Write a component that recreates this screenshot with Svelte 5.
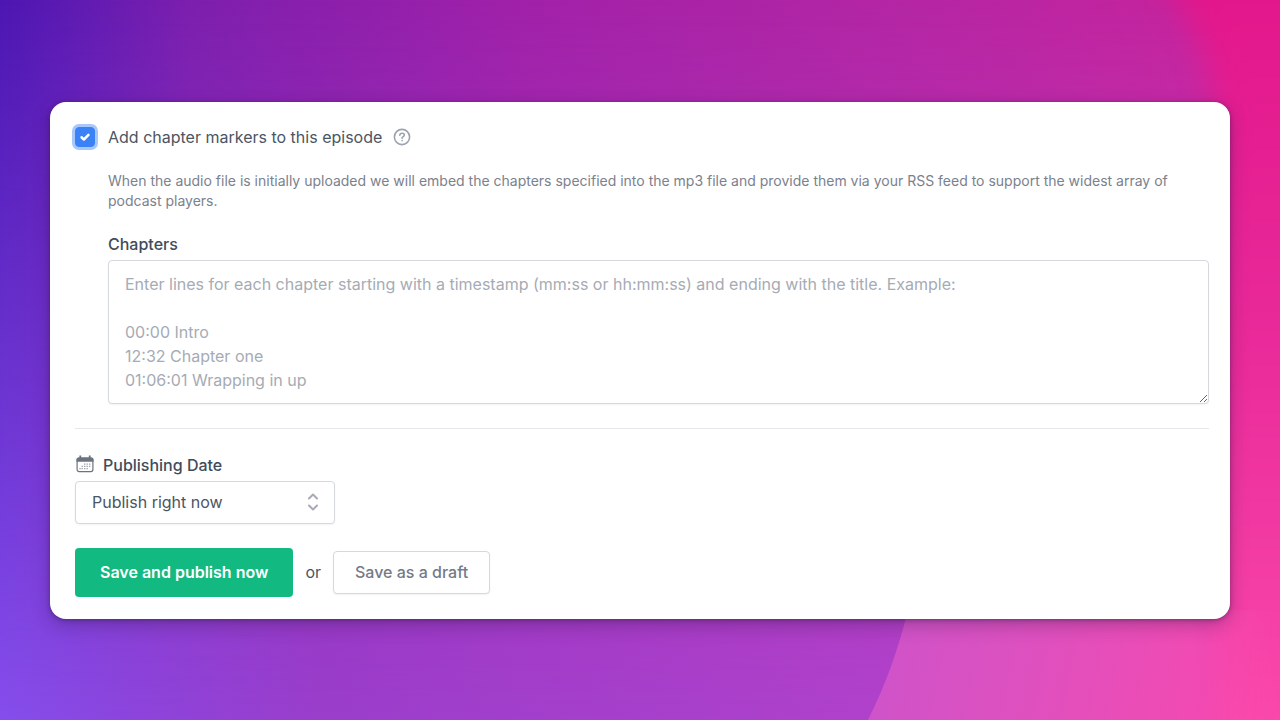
<script lang="ts">
const placeholder: string = [
    'Enter lines for each chapter starting with a timestamp (mm:ss or hh:mm:ss) and ending with the title. Example:',
    '',
    '00:00 Intro',
    '12:32 Chapter one',
    '01:06:01 Wrapping in up',
].join('\n');

const publishOptions: string[] = ['Publish right now', 'Schedule for later'];

let hasChapters: boolean = $state(true);
let chapters: string = $state('');
let publishing: string = $state(publishOptions[0]);
</script>

<div class="page">
    <svg class="page__backdrop" viewBox="0 0 1280 720" preserveAspectRatio="none" aria-hidden="true">
        <defs>
            <linearGradient id="top">
                <stop offset="0" stop-color="#4d16b2" />
                <stop offset=".06" stop-color="#5f1bb2" />
                <stop offset=".15" stop-color="#7d1fae" />
                <stop offset=".4" stop-color="#a021a9" />
                <stop offset=".7" stop-color="#b426a4" />
                <stop offset="1" stop-color="#cb239c" />
            </linearGradient>
            <linearGradient id="bottom">
                <stop offset="0" stop-color="#854eec" />
                <stop offset=".1" stop-color="#8c45dc" />
                <stop offset=".25" stop-color="#9a3ecb" />
                <stop offset=".7" stop-color="#b042cb" />
                <stop offset="1" stop-color="#c64cc8" />
            </linearGradient>
            <linearGradient id="fade" x2="0" y2="1">
                <stop offset="0" stop-color="#000" />
                <stop offset="1" stop-color="#fff" />
            </linearGradient>
            <mask id="fade-mask">
                <rect width="1280" height="720" fill="url(#fade)" />
            </mask>
            <linearGradient id="side" gradientUnits="userSpaceOnUse" x1="0" y1="0" x2="0" y2="720">
                <stop offset="0" stop-color="#e2178b" />
                <stop offset=".5" stop-color="#ea2b9a" />
                <stop offset="1" stop-color="#fa48ab" />
            </linearGradient>
            <linearGradient id="corner" gradientUnits="userSpaceOnUse" x1="880" y1="640" x2="1280" y2="720">
                <stop offset="0" stop-color="#cf53c9" />
                <stop offset=".4" stop-color="#df50be" />
                <stop offset=".8" stop-color="#f24ab2" />
                <stop offset="1" stop-color="#fc4aac" />
            </linearGradient>
            <linearGradient id="corner-fade" gradientUnits="userSpaceOnUse" x1="1190" y1="0" x2="1280" y2="0">
                <stop offset="0" stop-color="#fff" />
                <stop offset="1" stop-color="#000" />
            </linearGradient>
            <mask id="corner-mask" maskUnits="userSpaceOnUse" x="0" y="0" width="1280" height="720">
                <rect width="1280" height="720" fill="url(#corner-fade)" />
            </mask>
            <filter id="soften" x="-50%" y="-20%" width="200%" height="140%" color-interpolation-filters="sRGB">
                <feGaussianBlur stdDeviation="14" />
            </filter>
        </defs>
        <rect width="1280" height="720" fill="url(#top)" />
        <rect width="1280" height="720" fill="url(#bottom)" mask="url(#fade-mask)" />
        <path d="M1130 -60C1190 0 1215 60 1216 140L1190 800H1340V-60Z" fill="url(#side)" filter="url(#soften)" />
        <path d="M868 720C886 684 898 650 908 610H1280V720Z" fill="url(#corner)" mask="url(#corner-mask)" />
    </svg>

    <form class="card" onsubmit={(e) => e.preventDefault() }>
        <div class="toggle">
            <span class="checkbox">
                <input id="has-chapters" class="checkbox__input" type="checkbox" bind:checked={ hasChapters } />
                {#if hasChapters}
                    <svg class="checkbox__tick" viewBox="0 0 16 16" aria-hidden="true">
                        <path d="M5.2 8.2L7.1 10L10.8 6.3" />
                    </svg>
                {/if}
            </span>
            <label class="toggle__label" for="has-chapters">Add chapter markers to this episode</label>
            <svg class="help" viewBox="0 0 18 18" aria-hidden="true">
                <circle cx="9" cy="9" r="7.6" />
                <path d="M6.8 7.2C6.9 5.9 7.8 5.2 9.1 5.2C10.4 5.2 11.3 6 11.3 7.1C11.3 8.7 9.1 8.6 9.1 10.3" />
                <path d="M9.1 12.5V12.7" />
            </svg>
        </div>

        {#if hasChapters}
            <div class="chapters">
                <p class="chapters__hint">
                    When the audio file is initially uploaded we will embed the chapters specified into the mp3 file and
                    provide them via your RSS feed to support the widest array of podcast players.
                </p>
                <label class="label" for="chapters">Chapters</label>
                <textarea id="chapters" class="chapters__input" rows="5" { placeholder } bind:value={ chapters }></textarea>
            </div>
        {/if}

        <hr class="divider" />

        <div class="publishing">
            <label class="label" for="publishing">
                <svg class="calendar" viewBox="0 0 20 20" aria-hidden="true">
                    <rect x="2.1" y="3.2" width="15.8" height="13.4" rx="2" fill="none" stroke="currentColor" stroke-width="1.2" />
                    <path d="M1.5 6.8V4.4Q1.5 2.4 3.5 2.4H16.5Q18.5 2.4 18.5 4.4V6.8Z" />
                    <path d="M4.4 .6H6.2V3.5H4.4ZM13.8 .6H15.6V3.5H13.8Z" />
                    <path d="M9 8.6H10.4V9.8H9ZM11.5 8.6H12.9V9.8H11.5ZM14 8.6H15.4V9.8H14ZM6.5 10.8H7.9V12H6.5ZM9 10.8H10.4V12H9ZM11.5 10.8H12.9V12H11.5ZM14 10.8H15.4V12H14ZM4.3 13H5.7V14.2H4.3ZM6.5 13H7.9V14.2H6.5ZM9 13H10.4V14.2H9ZM11.5 13H12.9V14.2H11.5Z" opacity=".65" />
                </svg>
                Publishing Date
            </label>
            <div class="select">
                <select id="publishing" class="select__input" bind:value={ publishing }>
                    {#each publishOptions as option (option)}
                        <option value={ option }>{ option }</option>
                    {/each}
                </select>
                <svg class="select__arrows" viewBox="0 0 12 18" aria-hidden="true">
                    <path d="M2 5.5L6 1.5L10 5.5M2 12.5L6 16.5L10 12.5" />
                </svg>
            </div>
        </div>

        <div class="actions">
            <button class="button button--primary" type="submit">Save and publish now</button>
            <span>or</span>
            <button class="button button--secondary" type="button">Save as a draft</button>
        </div>
    </form>
</div>

<style>
:global(body) {
    margin: 0;
}
.page {
    min-height: 100vh;
    display: grid;
    grid-template-columns: minmax(0, 1fr);
    align-items: center;
    overflow: hidden;
    font-family: Inter, "Liberation Sans", sans-serif;
    font-size: 16px;
    line-height: 24px;
    color: #4b5563;
}
.page__backdrop {
    grid-area: 1 / 1;
    width: 100%;
    height: 100%;
    min-height: 100vh;
}
.card {
    grid-area: 1 / 1;
    z-index: 1;
    margin: 0 50px;
    padding: 23px 21px 22px 25px;
    background-color: #fff;
    border-radius: 16px;
    box-shadow: 0 6px 18px rgba(40, 20, 60, .3), 0 1px 4px rgba(40, 20, 60, .4);
}
.toggle {
    display: flex;
    align-items: center;
}
.toggle__label {
    margin: 0 11px 0 12px;
}
.checkbox {
    display: grid;
    width: 20px;
    height: 20px;
    margin-right: 1px;
}
.checkbox__input {
    grid-area: 1 / 1;
    appearance: none;
    width: 100%;
    height: 100%;
    margin: 0;
    border: 1px solid #d1d5db;
    border-radius: 4px;
}
.checkbox__input:checked {
    background-color: #3b82f6;
    border-color: #3b82f6;
    box-shadow: 0 0 0 3px #a8c7fb;
}
.checkbox__tick {
    grid-area: 1 / 1;
    width: 100%;
    height: 100%;
    fill: none;
    stroke: #fff;
    stroke-width: 2;
    stroke-linecap: round;
    stroke-linejoin: round;
    pointer-events: none;
}
.help {
    width: 18px;
    height: 18px;
    fill: none;
    stroke: #9ca3af;
    stroke-width: 1.6;
    stroke-linecap: round;
}
.chapters {
    display: flex;
    flex-direction: column;
    margin: 22px 0 0 33px;
}
.chapters__hint {
    margin: 0 0 21px;
    font-size: 14px;
    line-height: 20px;
    color: #7b818d;
}
.label {
    display: flex;
    align-items: center;
    gap: 8px;
    margin-bottom: 4px;
    font-weight: 500;
    color: #424b59;
}
.chapters__input {
    box-sizing: border-box;
    width: 100%;
    margin: 0;
    padding: 11px 16px;
    border: 1px solid #d5d8dd;
    border-radius: 4px;
    background-color: #fff;
    box-shadow: 0 1px 2px rgba(0, 0, 0, .05);
    font: inherit;
    color: inherit;
    resize: vertical;
}
.chapters__input::placeholder {
    color: #a6abb5;
}
.divider {
    height: 1px;
    margin: 24px 0;
    border: 0;
    background-color: #e5e7eb;
}
.calendar {
    width: 20px;
    height: 20px;
    fill: #6b7280;
    color: #6b7280;
}
.select {
    display: grid;
    width: 260px;
    align-items: center;
}
.select__input {
    grid-area: 1 / 1;
    appearance: none;
    height: 43px;
    padding: 0 40px 0 16px;
    border: 1px solid #d5d8dd;
    border-radius: 4px;
    background-color: #fff;
    box-shadow: 0 1px 2px rgba(0, 0, 0, .05);
    font: inherit;
    color: inherit;
}
.select__arrows {
    grid-area: 1 / 1;
    justify-self: end;
    width: 12px;
    height: 18px;
    margin-right: 16px;
    fill: none;
    stroke: #a6abb5;
    stroke-width: 2;
    stroke-linecap: round;
    stroke-linejoin: round;
    pointer-events: none;
}
.actions {
    display: flex;
    align-items: center;
    gap: 12px;
    margin-top: 24px;
}
.button {
    box-sizing: border-box;
    border-radius: 4px;
    font: inherit;
    cursor: pointer;
}
.button--primary {
    height: 49px;
    padding: 0 25px;
    border: 0;
    background-color: #12b981;
    font-weight: 600;
    color: #fff;
}
.button--secondary {
    height: 43px;
    padding: 0 21px;
    border: 1px solid #d5d8dd;
    background-color: #fff;
    box-shadow: 0 1px 2px rgba(0, 0, 0, .05);
    font-weight: 500;
    color: #747a87;
}
</style>
